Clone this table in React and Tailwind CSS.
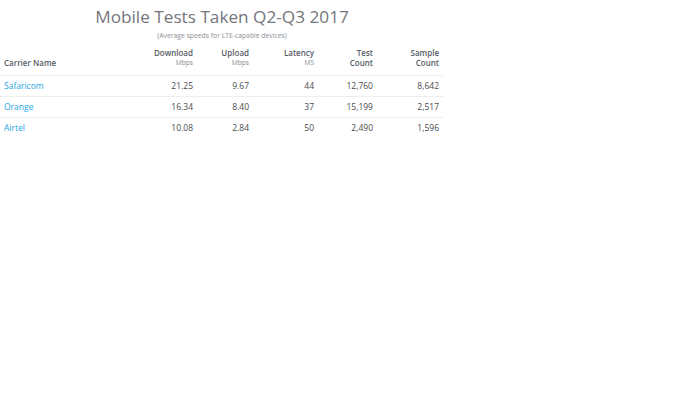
const rows = [
  { name: "Safaricom", dl: "21.25", ul: "9.67", lat: "44", tests: "12,760", samples: "8,642" },
  { name: "Orange", dl: "16.34", ul: "8.40", lat: "37", tests: "15,199", samples: "2,517" },
  { name: "Airtel", dl: "10.08", ul: "2.84", lat: "50", tests: "2,490", samples: "1,596" },
];

function HeadCell({ top, sub, width }) {
  return (
    <th className={`${width} px-1 pb-[7px] text-right align-bottom font-semibold`}>
      <div className="text-[8px] leading-[10px] text-[#575c66]">{top}</div>
      <div className="text-[6.6px] leading-[10px] font-normal text-[#8a8d92]">{sub}</div>
    </th>
  );
}

export default function App() {
  return (
    <div className="w-[681px] h-[400px] bg-white font-['Open_Sans',sans-serif]">
      <div className="w-[444px]">
        <h1 className="pt-[5px] text-center text-[17.2px] leading-[24px] text-[#75767b]">
          Mobile Tests Taken Q2-Q3 2017
        </h1>
        <p className="mt-[3px] text-center text-[6.8px] leading-[8px] text-[#8d8f94]">
          (Average speeds for LTE-capable devices)
        </p>
        <table className="mt-[8px] w-[443px] table-fixed border-collapse">
          <thead>
            <tr className="border-b border-[#eeeeee]">
              <th className="w-[125px] px-1 pb-[7px] text-left align-bottom text-[8px] leading-[10px] font-semibold text-[#575c66]">
                Carrier Name
              </th>
              <HeadCell top="Download" sub="Mbps" width="w-[72px]" />
              <HeadCell top="Upload" sub="Mbps" width="w-[56px]" />
              <HeadCell top="Latency" sub="MS" width="w-[65px]" />
              <th className="w-[59px] px-1 pb-[7px] text-right align-bottom text-[8px] leading-[10px] font-semibold text-[#575c66]">
                Test<br />Count
              </th>
              <th className="w-[66px] px-1 pb-[7px] text-right align-bottom text-[8px] leading-[10px] font-semibold text-[#575c66]">
                Sample<br />Count
              </th>
            </tr>
          </thead>
          <tbody className="text-[8.5px] text-[#4a4a4f]">
            {rows.map((r) => (
              <tr key={r.name} className="h-[21px] border-b border-[#eeeeee] last:border-b-0">
                <td className="px-1 text-left text-[#1ea6e6]">{r.name}</td>
                <td className="px-1 text-right">{r.dl}</td>
                <td className="px-1 text-right">{r.ul}</td>
                <td className="px-1 text-right">{r.lat}</td>
                <td className="px-1 text-right">{r.tests}</td>
                <td className="px-1 text-right">{r.samples}</td>
              </tr>
            ))}
          </tbody>
        </table>
      </div>
    </div>
  );
}
